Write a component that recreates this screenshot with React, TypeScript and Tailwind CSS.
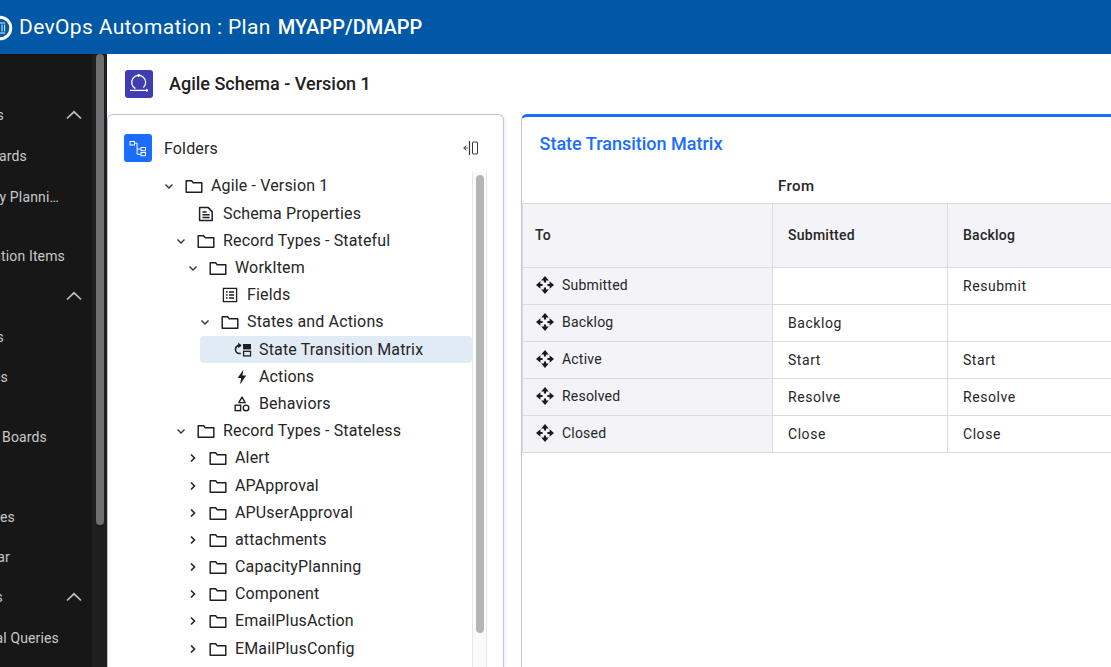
import React from "react";

const INK = "#1f1f1f";

function Folder() {
  return (
    <svg width="18" height="16" viewBox="0 0 18 16" fill="none" stroke={INK} strokeWidth="1.45" className="shrink-0">
      <path d="M1.2 14.2V2.8h5.4l1.6 2h8.6v9.4z" strokeLinejoin="round" />
    </svg>
  );
}

function ChevronDown() {
  return (
    <svg width="16" height="16" viewBox="0 0 16 16" fill="none" stroke="#333" strokeWidth="1.4" className="shrink-0">
      <path d="M4.5 6.5 8 10l3.5-3.5" />
    </svg>
  );
}

function ChevronRight() {
  return (
    <svg width="16" height="16" viewBox="0 0 16 16" fill="none" stroke="#222" strokeWidth="1.6" className="shrink-0">
      <path d="M6 4.5 9.5 8 6 11.5" />
    </svg>
  );
}

function DocIcon() {
  return (
    <svg width="16" height="16" viewBox="0 0 16 16" fill="none" stroke={INK} strokeWidth="1.5">
      <path d="M1.6 1.6h8.6l4 4v8.8H1.6z" strokeLinejoin="round" />
      <path d="M4.4 6h4.2M4.4 8.8h7.2M4.4 11.4h7.2" />
    </svg>
  );
}

function FieldsIcon() {
  return (
    <svg width="16" height="16" viewBox="0 0 16 16" fill="none" stroke={INK} strokeWidth="1.3">
      <rect x="1.4" y="1.4" width="13.2" height="13.2" />
      <path d="M4 5h1.6M7 5h5M4 8h1.6M7 8h5M4 11h1.6M7 11h5" />
    </svg>
  );
}

function MatrixIcon() {
  return (
    <svg width="18" height="16" viewBox="0 0 18 16" fill="none" stroke={INK}>
      <path d="M6.8 3.4H5.4a3.9 3.9 0 0 0-3.9 4.1 4 4 0 0 0 4 4h1.3" strokeWidth="1.6" />
      <path d="M4.2 0.6 7.6 3.4 4.2 6.2z" fill={INK} stroke="none" />
      <rect x="9" y="2" width="8" height="5.4" fill={INK} stroke="none" />
      <rect x="9.6" y="9.3" width="6.9" height="4.6" strokeWidth="1.3" />
    </svg>
  );
}

function BoltIcon() {
  return (
    <svg width="16" height="16" viewBox="0 0 16 16" fill={INK}>
      <path d="M9.4 0.8 3.6 9h3.6l-1.2 6.4L12.2 6.4H8.4z" />
    </svg>
  );
}

function ShapesIcon() {
  return (
    <svg width="16" height="16" viewBox="0 0 16 16" fill="none" stroke={INK} strokeWidth="1.4">
      <path d="M8 1.2 11.2 6.6H4.8z" strokeLinejoin="round" />
      <rect x="1.2" y="9.2" width="5.4" height="5.4" />
      <circle cx="12" cy="11.9" r="2.8" />
    </svg>
  );
}

function MoveIcon() {
  return (
    <svg width="18" height="18" viewBox="0 0 18 18" fill="#1a1a1a" className="shrink-0">
      <path d="M9 0 12.8 4.4H10.1V6.6H7.9V4.4H5.2z" />
      <path d="M9 18 5.2 13.6H7.9V11.4H10.1V13.6H12.8z" />
      <path d="M0 9 4.4 5.2V7.9H6.6V10.1H4.4V12.8z" />
      <path d="M18 9 13.6 12.8V10.1H11.4V7.9H13.6V5.2z" />
    </svg>
  );
}

type Row = {
  level: 0 | 1 | 2 | 3 | 4;
  label: string;
  chevron?: "down" | "right";
  icon?: React.ReactNode;
  selected?: boolean;
};

const PADS = ["pl-[53px]", "pl-[65px]", "pl-[77px]", "pl-[89px]", "pl-[101px]"];

const rows: Row[] = [
  { level: 0, label: "Agile - Version 1", chevron: "down" },
  { level: 1, label: "Schema Properties", icon: <DocIcon /> },
  { level: 1, label: "Record Types - Stateful", chevron: "down" },
  { level: 2, label: "WorkItem", chevron: "down" },
  { level: 3, label: "Fields", icon: <FieldsIcon /> },
  { level: 3, label: "States and Actions", chevron: "down" },
  { level: 4, label: "State Transition Matrix", icon: <MatrixIcon />, selected: true },
  { level: 4, label: "Actions", icon: <BoltIcon /> },
  { level: 4, label: "Behaviors", icon: <ShapesIcon /> },
  { level: 1, label: "Record Types - Stateless", chevron: "down" },
  { level: 2, label: "Alert", chevron: "right" },
  { level: 2, label: "APApproval", chevron: "right" },
  { level: 2, label: "APUserApproval", chevron: "right" },
  { level: 2, label: "attachments", chevron: "right" },
  { level: 2, label: "CapacityPlanning", chevron: "right" },
  { level: 2, label: "Component", chevron: "right" },
  { level: 2, label: "EmailPlusAction", chevron: "right" },
  { level: 2, label: "EMailPlusConfig", chevron: "right" },
];

function TreeRow({ row }: { row: Row }) {
  return (
    <div className={`relative flex h-[27.2px] items-center whitespace-nowrap ${PADS[row.level]}`}>
      {row.selected && (
        <div className="absolute bottom-0 left-[92px] right-0 top-0 rounded-[4px] bg-[#e1ebf6]" />
      )}
      <div className="relative flex items-center">
        <span className="flex w-[24px] shrink-0 items-center">
          {row.chevron === "down" && <ChevronDown />}
          {row.chevron === "right" && <ChevronRight />}
        </span>
        <span className="flex w-[26px] shrink-0 items-center">
          {row.chevron ? <Folder /> : <span className="ml-[1px] flex">{row.icon}</span>}
        </span>
        <span className="text-[16px] leading-[24px] tracking-[0.15px] text-[#262626]">{row.label}</span>
      </div>
    </div>
  );
}

function SideRow({
  text,
  w,
  mt,
  chevron,
}: {
  text?: string;
  w: string;
  mt: string;
  chevron?: boolean;
}) {
  return (
    <div className={`relative flex h-[20px] items-center ${mt}`}>
      <div className={`flex justify-end whitespace-nowrap text-[14px] tracking-[0.15px] text-[#c9c9c9] ${w}`}>{text}</div>
      {chevron && (
        <svg width="16" height="10" viewBox="0 0 16 10" fill="none" stroke="#bdbdbd" strokeWidth="1.7" className="absolute left-[66px] top-[5px]">
          <path d="M1 8.5 8 1.8l7 6.7" />
        </svg>
      )}
    </div>
  );
}

const tableRows = [
  ["Submitted", "", "Resubmit"],
  ["Backlog", "Backlog", ""],
  ["Active", "Start", "Start"],
  ["Resolved", "Resolve", "Resolve"],
  ["Closed", "Close", "Close"],
];

export default function App() {
  return (
    <div className="flex h-[667px] w-[1111px] flex-col overflow-hidden bg-white font-['Roboto',sans-serif]">
      <header className="flex h-[54px] shrink-0 items-center bg-[#0058a6] text-white">
        <svg width="19" height="30" viewBox="0 0 19 30" className="mt-[2px] shrink-0">
          <circle cx="0" cy="15" r="10.8" fill="none" stroke="#fff" strokeWidth="3" />
          <path d="M-4 10h9M-1 11.5v7M2 11.5v7M4.6 11.5v7M-4 20h9" stroke="#fff" strokeWidth="0.9" fill="none" />
        </svg>
        <span className="text-[21px] font-normal leading-none tracking-[0.35px]">DevOps Automation : Plan</span>
        <span className="ml-[7px] text-[20px] font-medium leading-none tracking-[0.02px]">MYAPP/DMAPP</span>
      </header>

      <div className="flex min-h-0 flex-1">
        <aside className="flex w-[107px] shrink-0 overflow-hidden bg-[#1f1f1f]">
          <nav className="w-[92px] shrink-0 overflow-hidden bg-[#171717] pt-[51px]">
            <SideRow text="Epics" w="w-[4px]" mt="mt-0" chevron />
            <SideRow text="Boards" w="w-[27px]" mt="mt-[21px]" />
            <SideRow text="Story Planni…" w="w-[59px]" mt="mt-[21px]" />
            <SideRow text="Automation Items" w="w-[65px]" mt="mt-[39px]" />
            <SideRow w="w-0" mt="mt-[20px]" chevron />
            <SideRow text="Items" w="w-[4px]" mt="mt-[21px]" />
            <SideRow text="Types" w="w-[8px]" mt="mt-[20px]" />
            <SideRow text="Task Boards" w="w-[47px]" mt="mt-[40px]" />
            <SideRow text="Releases" w="w-[15px]" mt="mt-[60px]" />
            <SideRow text="Calendar" w="w-[10px]" mt="mt-[20px]" />
            <SideRow text="Reports" w="w-[3px]" mt="mt-[20px]" chevron />
            <SideRow text="Global Queries" w="w-[59px]" mt="mt-[21px]" />
          </nav>
          <div className="ml-[4px] h-[471px] w-[8px] shrink-0 rounded-[4px] bg-[#6f6f6f]" />
        </aside>

        <main className="flex min-w-0 flex-1 flex-col">
          <div className="flex h-[60px] shrink-0 items-center pl-[18px]">
            <div className="flex h-[28px] w-[28px] items-center justify-center rounded-[3px] bg-[#3f3db1]">
              <svg width="20" height="20" viewBox="0 0 20 20" fill="none" stroke="#fff" strokeWidth="1.3">
                <path d="M6.4 14.6A7 7 0 1 1 14.4 13.6" />
                <path d="M8.6 -0.2 10.8 1.1 8.8 2.8" strokeWidth="1.1" />
                <path d="M1 16.4h18" />
                <path d="m17.2 15.2 1.8 1.2-1.8 1.2" strokeWidth="1" />
              </svg>
            </div>
            <h1 className="ml-[16px] text-[18px] font-medium leading-none text-[#212121]">Agile Schema - Version 1</h1>
          </div>

          <div className="flex min-h-0 flex-1">
            <section className="flex w-[397px] shrink-0 flex-col rounded-t-[6px] border border-b-0 border-[#c6c4dc] shadow-[0_1px_4px_rgba(0,0,0,0.12)]">
              <div className="h-[57px] shrink-0 pl-[16px] pr-[24px] pt-[19px]">
                <div className="flex h-[28px] items-center">
                  <div className="flex h-[28px] w-[28px] items-center justify-center rounded-[3px] bg-[#1a6dff]">
                    <svg width="20" height="20" viewBox="0 0 20 20" fill="none" stroke="#fff" strokeWidth="1">
                      <rect x="2" y="3.5" width="4.5" height="3.5" />
                      <rect x="13" y="9.5" width="4.5" height="3.2" />
                      <rect x="13" y="14.5" width="4.5" height="3.2" />
                      <path d="M6.5 5.2h2.6v11H13M9.1 11H13" />
                    </svg>
                  </div>
                  <span className="ml-[12px] mt-[1px] flex-1 text-[16px] tracking-[0.15px] text-[#262626]">Folders</span>
                  <svg width="16" height="16" viewBox="0 0 16 16" fill="none" stroke="#3a3a3a" strokeWidth="1">
                    <path d="M0.8 8h4" />
                    <path d="M3.4 5.6 0.8 8l2.6 2.4" />
                    <path d="M6.5 1v14" strokeWidth="1.2" />
                    <rect x="9.5" y="2" width="5" height="12" rx="0.5" />
                  </svg>
                </div>
              </div>
              <div className="flex min-h-0 flex-1">
                <div className="min-w-0 flex-1 pt-[0.9px]">
                  {rows.map((r) => (
                    <TreeRow key={r.label} row={r} />
                  ))}
                </div>
                <div className="mr-[16px] h-full w-[15px] shrink-0 border-x border-[#e8e8e8] bg-[#fafafa] px-[3px] pt-[3px]">
                  <div className="h-[458px] w-[8px] rounded-[4px] bg-[#b5b5b5]" />
                </div>
              </div>
            </section>

            <section className="ml-[17px] flex min-w-0 flex-1 flex-col overflow-hidden rounded-tl-[6px] border-l border-t-[3px] border-l-[#c6c4dc] border-t-[#1a6dff]">
              <h2 className="flex h-[53px] shrink-0 items-center pl-[17.5px] text-[18px] font-medium text-[#1a6dff]">State Transition Matrix</h2>
              <div className="flex h-[33px] shrink-0 items-center pl-[256px] text-[15px] font-medium tracking-[0.4px] text-[#262626]">From</div>
              <table className="w-[800px] table-fixed border-collapse text-[14px] text-[#262626]">
                <colgroup>
                  <col className="w-[250px]" />
                  <col className="w-[175px]" />
                  <col className="w-[375px]" />
                </colgroup>
                <thead>
                  <tr className="h-[64px] bg-[#f3f3f8]">
                    <th className="border border-[#dcdcdc] pl-[12px] text-left text-[14px] font-medium tracking-[0.25px]">To</th>
                    <th className="border border-[#dcdcdc] pl-[15px] text-left text-[14px] font-medium tracking-[0.25px]">Submitted</th>
                    <th className="border border-[#dcdcdc] pl-[15px] text-left text-[14px] font-medium tracking-[0.25px]">Backlog</th>
                  </tr>
                </thead>
                <tbody>
                  {tableRows.map((r) => (
                    <tr key={r[0]} className="h-[37px]">
                      <td className="border border-[#dcdcdc] bg-[#f3f3f8] pl-[13px]">
                        <div className="-mt-[2px] flex items-center gap-[8px] text-[14px] tracking-[0.2px]">
                          <MoveIcon />
                          <span>{r[0]}</span>
                        </div>
                      </td>
                      <td className="border border-[#dcdcdc] pl-[15px] tracking-[0.55px]">{r[1]}</td>
                      <td className="border border-[#dcdcdc] pl-[15px] tracking-[0.55px]">{r[2]}</td>
                    </tr>
                  ))}
                </tbody>
              </table>
            </section>
          </div>
        </main>
      </div>
    </div>
  );
}
